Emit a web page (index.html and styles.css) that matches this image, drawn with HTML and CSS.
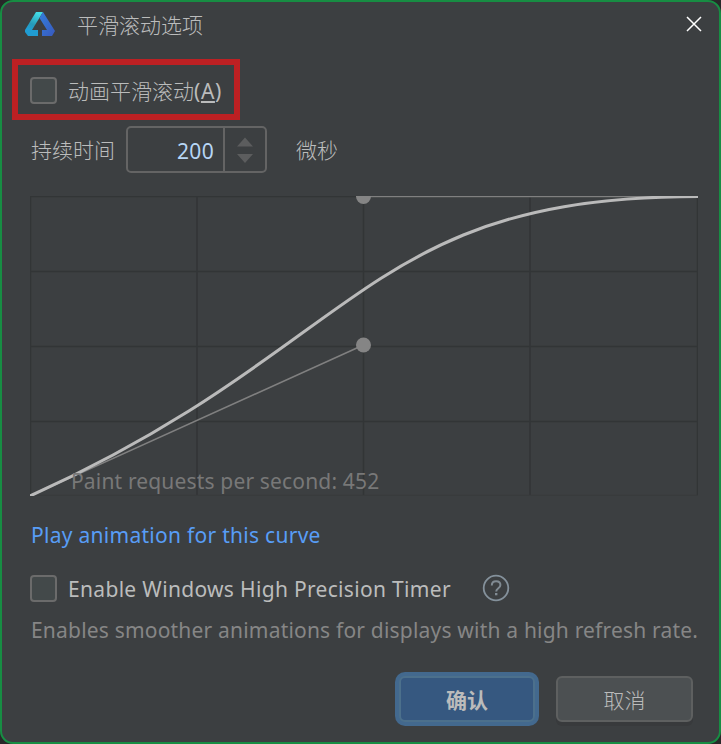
FILE: index.html
```html
<!DOCTYPE html>
<html lang="zh-CN">
<head>
<meta charset="utf-8">
<title>平滑滚动选项</title>
<link rel="stylesheet" href="styles.css">
</head>
<body>
<main class="dialog">
  <header class="titlebar">
    <svg class="logo" width="30" height="24" viewBox="0 0 30 24">
      <defs>
        <linearGradient id="left" x1="0.6" y1="0" x2="0.2" y2="1"><stop offset="0" stop-color="#43dce5"/><stop offset=".65" stop-color="#269ab9"/><stop offset="1" stop-color="#209fd7"/></linearGradient>
        <linearGradient id="right" x1="0" y1="0" x2="1" y2="1"><stop offset="0" stop-color="#347fdd"/><stop offset="1" stop-color="#3859bd"/></linearGradient>
      </defs>
      <path fill="url(#left)" d="M11 0h7L7 18H0z"/>
      <path fill="#209cd2" d="M0 18h13v6H3L0 20z"/>
      <path fill="url(#right)" d="M18 0l12 19-3 5H17v-6h5L14.500 6z"/>
    </svg>
    <h1 class="title">平滑滚动选项</h1>
    <svg class="close" width="16" height="16" viewBox="0 0 16 16"><path d="M1 1l14 14M15 1L1 15" fill="none" stroke="#fff" stroke-width="1.500"/></svg>
  </header>
  <section class="highlight">
    <span class="checkbox"></span>
    <span class="label">动画平滑滚动<span class="shortcut">(<span class="mnemonic">A</span>)</span></span>
  </section>
  <section class="duration">
    <span class="label">持续时间</span>
    <div class="spinner">
      <span class="value">200</span>
      <svg class="arrows" width="40" height="43" viewBox="0 0 40 43"><path fill="#5c5d5e" d="M12 18.500l8-9 8 9zM12 26h16l-8 9z"/></svg>
    </div>
    <span class="label">微秒</span>
  </section>
  <section class="graph">
    <svg width="668" height="300" viewBox="0 0 668 300">
      <path class="grid" d="M.5 0v300M167 0v300M333.500 0v300M500 0v300M667.500 0v300M0 .5h668M0 75.500h668M0 150.500h668M0 225.500h668"/>
      <path class="grid faint" d="M0 299.500h668"/>
      <path class="guide" d="M0 300L333.500 149M333.500 .5H668"/>
      <path class="curve" d="M0 300C333.500 149 333.500 .5 668 .5"/>
      <circle class="knob" cx="333.500" cy="149" r="7.500"/>
      <circle class="knob" cx="333.500" cy=".5" r="7.500"/>
    </svg>
    <span class="stats">Paint requests per second: 452</span>
  </section>
  <a class="play">Play animation for this curve</a>
  <section class="timer">
    <span class="checkbox"></span>
    <span class="label timer-label">Enable Windows High Precision Timer</span>
    <svg class="help" width="28" height="28" viewBox="0 0 28 28" fill="none"><circle cx="14" cy="14" r="12.300" stroke="#84919b" stroke-width="1.800"/><path d="M9.800 11.500C9.800 8.500 11.500 7.300 14.100 7.300c2.500 0 4.300 1.400 4.300 3.700 0 3.200-4.200 3.200-4.200 6.500" stroke="#818b93" stroke-width="2"/><path d="M13 19h2.400v2.300H13z" fill="#818b93"/></svg>
  </section>
  <p class="hint">Enables smoother animations for displays with a high refresh rate.</p>
  <footer class="actions">
    <button class="button primary">确认</button>
    <button class="button">取消</button>
  </footer>
</main>
</body>
</html>
```
FILE: styles.css
```css
* { box-sizing: border-box; }
body {
  margin: 0;
  background: #282829;
  overflow: hidden;
  color: #bbbcbc;
  font: 300 21px/30px "Noto Sans", "Noto Sans CJK SC", sans-serif;
}
.dialog {
  width: 721px;
  height: 744px;
  display: flex;
  flex-direction: column;
  background: #3c3f41;
  border: 2px solid #178d43;
  border-radius: 13px;
}
.titlebar {
  display: flex;
  align-items: center;
  height: 44px;
  padding: 0 17px 0 23px;
}
.title {
  margin: 0 auto 0 22px;
  font-size: 21px;
  font-weight: 300;
  font-family: "Noto Sans CJK SC", sans-serif;
}
.label { white-space: nowrap; }
.highlight {
  display: flex;
  align-items: center;
  gap: 11px;
  width: 228px;
  height: 61px;
  margin: 13px 0 0 10px;
  padding: 2px 0 0 12px;
  border: 6px solid #bd2023;
}
.checkbox {
  width: 27px;
  height: 27px;
  flex: none;
  background: #43494a;
  border: 2px solid #6b6b6b;
  border-radius: 4px;
}
.shortcut { font-weight: 400; letter-spacing: .6px; }
.mnemonic { text-decoration: underline; text-decoration-thickness: 2px; text-underline-offset: 2px; }
.duration {
  display: flex;
  align-items: center;
  height: 47px;
  margin: 6px 0 0 29px;
}
.spinner {
  display: flex;
  width: 141px;
  height: 47px;
  margin: 0 29px 0 11px;
  border: 2px solid #646464;
  border-radius: 5px;
}
.value {
  width: 97px;
  padding: 8px 9px 0 0;
  border-right: 2px solid #646464;
  text-align: right;
  color: #b7d6f5;
  font-weight: 400;
  letter-spacing: .3px;
}
.graph {
  position: relative;
  height: 300px;
  margin: 23px 0 0 28px;
}
.graph svg { display: block; }
.grid { stroke: #323536; stroke-width: 1.500; fill: none; }
.faint { stroke: #383b3c; }
.guide { stroke: #808080; stroke-width: 1.500; fill: none; }
.curve { stroke: #bababa; stroke-width: 3; fill: none; }
.knob { fill: #858585; }
.stats {
  position: absolute;
  left: 41px;
  top: 270px;
  color: #787878;
  white-space: nowrap;
  letter-spacing: .16px;
}
.play {
  margin: 24px 0 0 29px;
  color: #589df6;
  font-weight: 400;
  white-space: nowrap;
  letter-spacing: .28px;
}
.stats, .hint, .timer-label { font-weight: 400; }
.timer {
  display: flex;
  align-items: center;
  height: 30px;
  margin: 23px 0 0 28px;
}
.timer-label { width: 382px; margin: 1px 32px 0 11px; letter-spacing: .32px; }
.hint { margin: 12px 0 0 29px; color: #868686; white-space: nowrap; letter-spacing: .195px; }
.actions {
  display: flex;
  justify-content: flex-end;
  gap: 17px;
  margin: 27px 26px 0 0;
}
.button {
  width: 137px;
  height: 46px;
  margin-top: 4px;
  padding: 0;
  border: 2px solid #5e6060;
  border-radius: 6px;
  background: #4c5052;
  color: #bbb;
  font: 300 21px/30px "Noto Sans CJK SC", sans-serif;
  box-shadow: 0 4px 0 #383a3c;
}
.primary {
  width: 136px;
  margin-right: 4px;
  background: #365880;
  border-color: #4c708c;
  box-shadow: 0 0 0 4px #43698e;
  font-weight: 700;
}
```
